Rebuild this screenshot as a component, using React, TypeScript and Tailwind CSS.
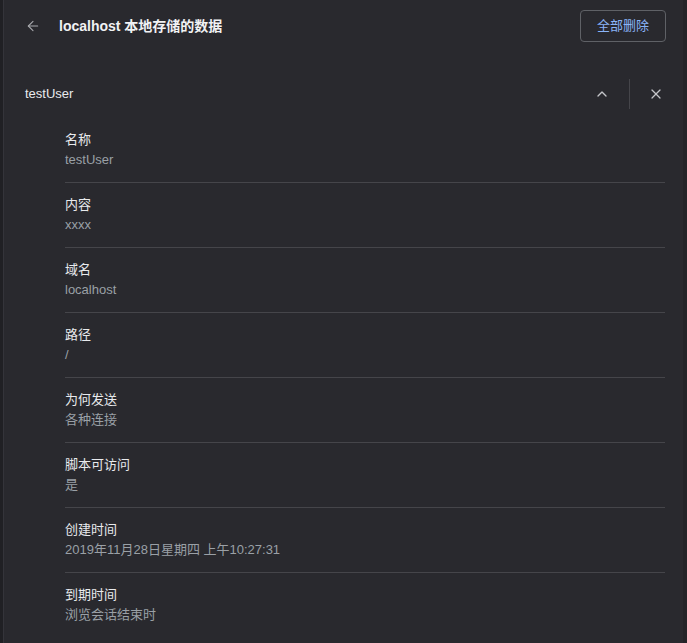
import { ArrowLeft, ChevronUp, X } from "lucide-react";

const FIELDS = [
  { label: "名称", value: "testUser" },
  { label: "内容", value: "xxxx" },
  { label: "域名", value: "localhost" },
  { label: "路径", value: "/" },
  { label: "为何发送", value: "各种连接" },
  { label: "脚本可访问", value: "是" },
  { label: "创建时间", value: "2019年11月28日星期四 上午10:27:31" },
  { label: "到期时间", value: "浏览会话结束时" },
];

function Field({ label, value, last }: { label: string; value: string; last: boolean }) {
  return (
    <div className={`pt-3 pb-3 ${last ? "" : "border-b border-[#45454a]"}`}>
      <div className="text-[13px] leading-5 text-[#e8eaed]">{label}</div>
      <div className="text-[13px] leading-5 text-[#9aa0a6]">{value}</div>
    </div>
  );
}

export default function App() {
  return (
    <div
      className="flex h-[643px] w-[687px] overflow-hidden bg-[#29292e]"
      style={{ fontFamily: '"Liberation Sans", "Noto Sans CJK SC", sans-serif' }}
    >
      <div className="w-[4px] shrink-0 bg-[#202024] border-r border-[#34343a]" />
      <div className="flex-1 min-w-0">
        {/* header */}
        <div className="flex items-center h-[51px] pl-[21px] pr-[17px] pt-[1px]">
          <button className="w-[16px] flex items-center justify-center text-[#a8a9ad]">
            <ArrowLeft size={16} strokeWidth={1.6} />
          </button>
          <h1 className="ml-[18px] text-[14px] font-bold text-[#f1f2f4]">localhost 本地存储的数据</h1>
          <button className="ml-auto h-[32px] w-[86px] rounded-[4px] border border-[#5f6166] text-[13px] text-[#8ab4f8]">
            全部删除
          </button>
        </div>

        {/* cookie row */}
        <div className="flex items-center h-[48px] mt-[19px] pl-[21px] pr-[19px]">
          <span className="text-[13px] text-[#e8eaed]">testUser</span>
          <div className="ml-auto flex items-center">
            <ChevronUp size={16} strokeWidth={2} className="text-[#c4c5c9]" />
            <div className="ml-[19px] mr-[18px] h-[30px] w-px bg-[#45454a]" />
            <X size={16} strokeWidth={1.8} className="text-[#c4c5c9]" />
          </div>
        </div>

        {/* details */}
        <div className="pl-[61px] pr-[18px]">
          {FIELDS.map((f, i) => (
            <Field key={f.label} label={f.label} value={f.value} last={i === FIELDS.length - 1} />
          ))}
        </div>
      </div>
      <div className="w-[4px] shrink-0 bg-[#242428]" />
    </div>
  );
}
